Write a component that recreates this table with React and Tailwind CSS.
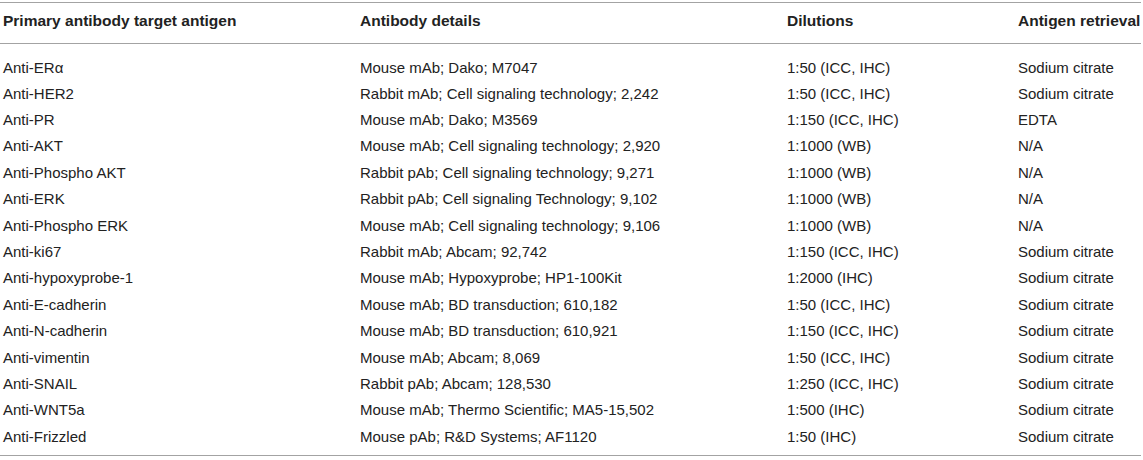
import React from "react";

const rows = [
  ["Anti-ERα", "Mouse mAb; Dako; M7047", "1:50 (ICC, IHC)", "Sodium citrate"],
  ["Anti-HER2", "Rabbit mAb; Cell signaling technology; 2,242", "1:50 (ICC, IHC)", "Sodium citrate"],
  ["Anti-PR", "Mouse mAb; Dako; M3569", "1:150 (ICC, IHC)", "EDTA"],
  ["Anti-AKT", "Mouse mAb; Cell signaling technology; 2,920", "1:1000 (WB)", "N/A"],
  ["Anti-Phospho AKT", "Rabbit pAb; Cell signaling technology; 9,271", "1:1000 (WB)", "N/A"],
  ["Anti-ERK", "Rabbit pAb; Cell signaling Technology; 9,102", "1:1000 (WB)", "N/A"],
  ["Anti-Phospho ERK", "Mouse mAb; Cell signaling technology; 9,106", "1:1000 (WB)", "N/A"],
  ["Anti-ki67", "Rabbit mAb; Abcam; 92,742", "1:150 (ICC, IHC)", "Sodium citrate"],
  ["Anti-hypoxyprobe-1", "Mouse mAb; Hypoxyprobe; HP1-100Kit", "1:2000 (IHC)", "Sodium citrate"],
  ["Anti-E-cadherin", "Mouse mAb; BD transduction; 610,182", "1:50 (ICC, IHC)", "Sodium citrate"],
  ["Anti-N-cadherin", "Mouse mAb; BD transduction; 610,921", "1:150 (ICC, IHC)", "Sodium citrate"],
  ["Anti-vimentin", "Mouse mAb; Abcam; 8,069", "1:50 (ICC, IHC)", "Sodium citrate"],
  ["Anti-SNAIL", "Rabbit pAb; Abcam; 128,530", "1:250 (ICC, IHC)", "Sodium citrate"],
  ["Anti-WNT5a", "Mouse mAb; Thermo Scientific; MA5-15,502", "1:500 (IHC)", "Sodium citrate"],
  ["Anti-Frizzled", "Mouse pAb; R&D Systems; AF1120", "1:50 (IHC)", "Sodium citrate"],
];

const headers = [
  "Primary antibody target antigen",
  "Antibody details",
  "Dilutions",
  "Antigen retrieval",
];

const App = () => {
  return (
    <div className="w-[1143px] h-[460px] bg-white pt-[2px] font-['Liberation_Sans',Arial,sans-serif] text-[#222]">
      <table className="w-[1141px] border-collapse table-fixed">
        <colgroup>
          <col className="w-[360px]" />
          <col className="w-[427px]" />
          <col className="w-[231px]" />
          <col />
        </colgroup>
        <thead>
          <tr className="border-t border-b border-[#a3a3a3]">
            {headers.map((h, i) => (
              <th
                key={h}
                className={`h-[41px] pb-[5px] text-left align-middle text-[15.5px] font-bold leading-none whitespace-nowrap ${
                  i === 0 ? "pl-[3px]" : ""
                }`}
              >
                {h}
              </th>
            ))}
          </tr>
        </thead>
        <tbody className="border-b border-[#a3a3a3]">
          {rows.map((r, idx) => (
            <tr key={r[0]}>
              {r.map((cell, i) => (
                <td
                  key={i}
                  className={`text-[15px] leading-none align-middle whitespace-nowrap ${
                    i === 0 ? "pl-[3px]" : ""
                  } ${
                    idx === 0
                      ? "h-[36.5px] pt-[10px]"
                      : idx === rows.length - 1
                      ? "h-[32.5px] pb-[6px]"
                      : "h-[26.4px]"
                  }`}
                >
                  {cell}
                </td>
              ))}
            </tr>
          ))}
        </tbody>
      </table>
    </div>
  );
};

export default App;
